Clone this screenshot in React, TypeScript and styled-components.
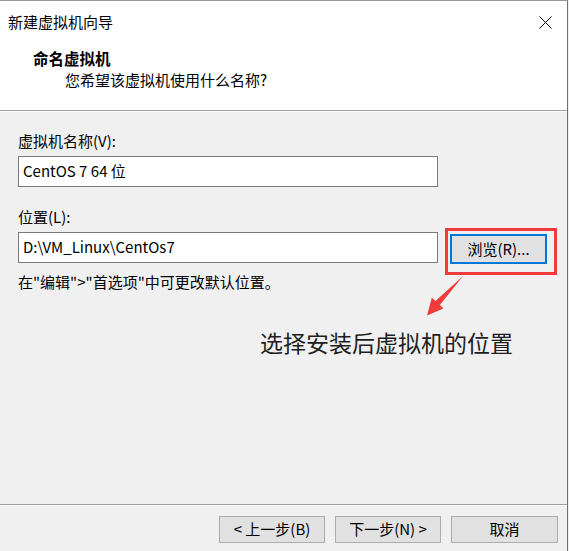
import React from "react";
import styled, { createGlobalStyle } from "styled-components";

const GlobalStyle = createGlobalStyle`
  html, body {
    margin: 0;
    padding: 0;
    background: #f0f0f0;
  }
  body {
    font-family: "Noto Sans CJK SC", "Noto Sans", sans-serif;
    color: #000;
  }
`;

const Window = styled.div`
  position: relative;
  width: 568px;
  height: 551px;
  box-sizing: border-box;
  border-top: 1px solid #9a9a9a;
  border-right: 1px solid #707070;
  display: flex;
  flex-direction: column;
  background: #f0f0f0;
  overflow: hidden;
`;

const Top = styled.div`
  background: #fff;
  border-bottom: 1px solid #a0a0a0;
  height: 110px;
  box-sizing: border-box;
`;

const TitleBar = styled.div`
  display: flex;
  align-items: center;
  justify-content: space-between;
  height: 40px;
  padding: 2px 15px 0 8px;
  box-sizing: border-box;
  font-size: 15px;
  line-height: 20px;
`;

const Close = styled.svg`
  width: 13px;
  height: 13px;
  display: block;
`;

const Header = styled.div`
  padding: 7px 0 0 33px;
`;

const HeaderTitle = styled.div`
  font-size: 15.5px;
  font-weight: 700;
  line-height: 20px;
`;

const HeaderSub = styled.div`
  font-size: 15px;
  line-height: 20px;
  margin: 2px 0 0 32px;
`;

const Body = styled.div`
  flex: 1;
  position: relative;
  padding: 19px 0 0 18px;
  border-top: 1px solid #fff;
  border-bottom: 1px solid #a0a0a0;
`;

const Label = styled.div<{ $gap?: number }>`
  font-size: 15px;
  line-height: 20px;
  margin-top: ${(p) => p.$gap ?? 0}px;
`;

const Field = styled.div`
  width: 420px;
  height: 31px;
  box-sizing: border-box;
  border: 1px solid #7a7a7a;
  background: #fff;
  padding: 0 4px;
  font-size: 15px;
  line-height: 27px;
  white-space: nowrap;
`;

const Row = styled.div`
  display: flex;
  align-items: flex-start;
  margin-top: 5px;
`;

const BrowseButton = styled.div`
  position: relative;
  margin: 2px 0 0 12px;
  width: 97px;
  height: 30px;
  box-sizing: border-box;
  border: 2px solid #0078d7;
  background: #e1e1e1;
  font-size: 15px;
  line-height: 25px;
  text-align: center;

  &::before {
    content: "";
    position: absolute;
    left: -7px;
    top: -8px;
    width: 112px;
    height: 47px;
    box-sizing: border-box;
    border: 3px solid #ef3b3b;
  }
`;

const Hint = styled.div`
  font-size: 15px;
  line-height: 20px;
  margin-top: 8px;
`;

const Arrow = styled.svg`
  position: absolute;
  left: 0;
  top: -112px;
  width: 568px;
  height: 551px;
  pointer-events: none;
`;

const Note = styled.div`
  position: absolute;
  left: 260px;
  top: 215px;
  font-size: 23px;
  line-height: 30px;
  color: #1e1e1e;
  white-space: nowrap;
`;

const Footer = styled.div`
  border-top: 1px solid #fff;
  height: 46px;
  box-sizing: border-box;
  display: flex;
  justify-content: flex-end;
  gap: 10px;
  padding: 10px 9px 0 0;
`;

const Button = styled.div<{ $wide?: boolean }>`
  width: ${(p) => (p.$wide ? 107 : 106)}px;
  height: 27px;
  box-sizing: border-box;
  border: 1px solid #adadad;
  background: #e1e1e1;
  font-size: 15px;
  line-height: 24px;
  text-align: center;
`;

export default function App() {
  return (
    <>
      <GlobalStyle />
      <Window>
        <Top>
          <TitleBar>
            <span>新建虚拟机向导</span>
            <Close viewBox="0 0 13 13">
              <path d="M0.5 0.5 L12.5 12.5 M12.5 0.5 L0.5 12.5" stroke="#000" strokeWidth="1" />
            </Close>
          </TitleBar>
          <Header>
            <HeaderTitle>命名虚拟机</HeaderTitle>
            <HeaderSub>您希望该虚拟机使用什么名称?</HeaderSub>
          </Header>
        </Top>
        <Body>
          <Label>虚拟机名称(V):</Label>
          <Row>
            <Field>CentOS 7 64 位</Field>
          </Row>
          <Label $gap={20}>位置(L):</Label>
          <Row>
            <Field>D:\VM_Linux\CentOs7</Field>
            <BrowseButton>浏览(R)...</BrowseButton>
          </Row>
          <Hint>在"编辑"&gt;"首选项"中可更改默认位置。</Hint>
          <Arrow viewBox="0 0 568 551">
            <polygon
              points="463,276 439.9,305.1 443.5,308.5 427,315.5 431.8,297.8 435.5,301.1"
              fill="#ef3b3b"
            />
          </Arrow>
          <Note>选择安装后虚拟机的位置</Note>
        </Body>
        <Footer>
          <Button>&lt; 上一步(B)</Button>
          <Button>下一步(N) &gt;</Button>
          <Button $wide>取消</Button>
        </Footer>
      </Window>
    </>
  );
}
